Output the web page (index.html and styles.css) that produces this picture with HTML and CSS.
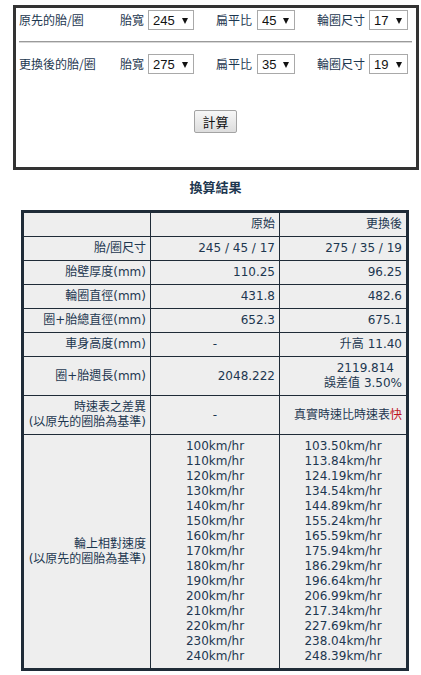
FILE: index.html
```html
<!DOCTYPE html>
<html lang="zh-Hant">
<head>
<meta charset="utf-8">
<title>輪胎換算</title>
<link rel="stylesheet" href="styles.css">
</head>
<body>
<div class="calc">
  <div class="tire-row">
    <span class="lbl">原先的胎/圈</span>
    <span class="field f1"><span class="fl">胎寬</span><span class="sel w46"><select><option>245</option></select></span></span>
    <span class="field f2"><span class="fl">扁平比</span><span class="sel w38"><select><option>45</option></select></span></span>
    <span class="field"><span class="fl">輪圈尺寸</span><span class="sel w39"><select><option>17</option></select></span></span>
  </div>
  <hr class="sep">
  <div class="tire-row">
    <span class="lbl">更換後的胎/圈</span>
    <span class="field f1"><span class="fl">胎寬</span><span class="sel w46"><select><option>275</option></select></span></span>
    <span class="field f2"><span class="fl">扁平比</span><span class="sel w38"><select><option>35</option></select></span></span>
    <span class="field"><span class="fl">輪圈尺寸</span><span class="sel w39"><select><option>19</option></select></span></span>
  </div>
  <div class="actions"><button class="btn" type="button">計算</button></div>
</div>

<h2 class="result-title">換算結果</h2>

<table class="result">
  <tr><td></td><td>原始</td><td>更換後</td></tr>
  <tr><td>胎/圈尺寸</td><td>245 / 45 / 17</td><td>275 / 35 / 19</td></tr>
  <tr><td>胎壁厚度(mm)</td><td>110.25</td><td>96.25</td></tr>
  <tr><td>輪圈直徑(mm)</td><td>431.8</td><td>482.6</td></tr>
  <tr><td>圈+胎總直徑(mm)</td><td>652.3</td><td>675.1</td></tr>
  <tr><td>車身高度(mm)</td><td class="c">-</td><td>升高 11.40</td></tr>
  <tr><td>圈+胎週長(mm)</td><td>2048.222</td><td><span class="pad">2119.814</span><br>誤差值 3.50%</td></tr>
  <tr><td>時速表之差異<br>(以原先的圈胎為基準)</td><td class="c">-</td><td>真實時速比時速表<span class="fast">快</span></td></tr>
  <tr class="speeds">
    <td>輪上相對速度<br>(以原先的圈胎為基準)</td>
    <td class="c">100km/hr<br>110km/hr<br>120km/hr<br>130km/hr<br>140km/hr<br>150km/hr<br>160km/hr<br>170km/hr<br>180km/hr<br>190km/hr<br>200km/hr<br>210km/hr<br>220km/hr<br>230km/hr<br>240km/hr</td>
    <td class="c">103.50km/hr<br>113.84km/hr<br>124.19km/hr<br>134.54km/hr<br>144.89km/hr<br>155.24km/hr<br>165.59km/hr<br>175.94km/hr<br>186.29km/hr<br>196.64km/hr<br>206.99km/hr<br>217.34km/hr<br>227.69km/hr<br>238.04km/hr<br>248.39km/hr</td>
  </tr>
</table>
</body>
</html>
```

FILE: styles.css
```css
html, body {
  margin: 0;
  padding: 0;
  background: #ffffff;
}
body {
  font-family: "DejaVu Sans", "Noto Sans CJK TC", sans-serif;
  font-size: 12px;
  color: #1d3750;
}
.calc {
  box-sizing: border-box;
  width: 406px;
  height: 165px;
  margin: 5px 0 0 13px;
  border: 3px solid #333333;
  padding: 2px 4px 0 3px;
  font-family: "Noto Sans CJK TC", sans-serif;
}
.tire-row {
  display: grid;
  grid-template-columns: 101px 96px 101px auto;
  align-items: center;
  height: 20px;
}
.lbl, .fl {
  font-size: 12px;
  line-height: 20px;
  white-space: nowrap;
}
.field {
  display: flex;
  align-items: center;
  gap: 4px;
}
.f2 { gap: 5px; }
.sel {
  position: relative;
  display: inline-block;
  height: 20px;
}
.sel select {
  -webkit-appearance: none;
  appearance: none;
  box-sizing: border-box;
  height: 20px;
  width: 100%;
  margin: 0;
  padding: 0 0 0 4px;
  border: 1px solid #a9a9a9;
  border-radius: 0;
  background: #ffffff;
  font-family: "Liberation Sans", Arial, sans-serif;
  font-size: 13px;
  color: #111111;
}
.sel::after {
  content: "";
  position: absolute;
  right: 6px;
  top: 8px;
  border-left: 3.5px solid transparent;
  border-right: 3.5px solid transparent;
  border-top: 6px solid #111111;
  pointer-events: none;
}
.w46 { width: 46px; }
.w38 { width: 38px; }
.w39 { width: 39px; }
.sep {
  margin: 11px 0 11px 0;
  height: 0;
  border: 0;
  border-top: 1px solid #9a9a9a;
  border-bottom: 1px solid #d8d8d8;
}
.actions {
  display: flex;
  justify-content: center;
  margin-top: 36px;
  padding-right: 0;
}
.btn {
  box-sizing: border-box;
  width: 43px;
  height: 23px;
  padding: 0;
  border: 1px solid #a3a3a3;
  border-radius: 2px;
  background: linear-gradient(#f7f7f7, #dddddd);
  font-family: "Noto Sans CJK TC", sans-serif;
  font-size: 13px;
  color: #111111;
}
.result-title {
  margin: 9px 0 16px 0;
  text-align: center;
  font-family: "Noto Sans CJK TC", sans-serif;
  font-size: 13px;
  line-height: 15px;
  font-weight: bold;
  color: #1d3750;
  padding-left: 10px;
}
.result {
  margin-left: 21px;
  border: 3px solid #1f2b37;
  border-spacing: 0;
  background: #eeeeee;
  table-layout: fixed;
  width: 388px;
}
.result td {
  padding: 4px 4px;
  line-height: 15px;
  text-align: right;
  vertical-align: middle;
  border-right: 1px solid #1f2b37;
  border-bottom: 1px solid #1f2b37;
  white-space: nowrap;
}
.result td:first-child { width: 118px; }
.result td:nth-child(2) { width: 120px; }
.result td:last-child { border-right: 0; }
.result tr:last-child td { border-bottom: 0; }
.result td.c { text-align: center; }
.pad { padding-right: 8px; }
.fast { color: #c0141b; }
```
